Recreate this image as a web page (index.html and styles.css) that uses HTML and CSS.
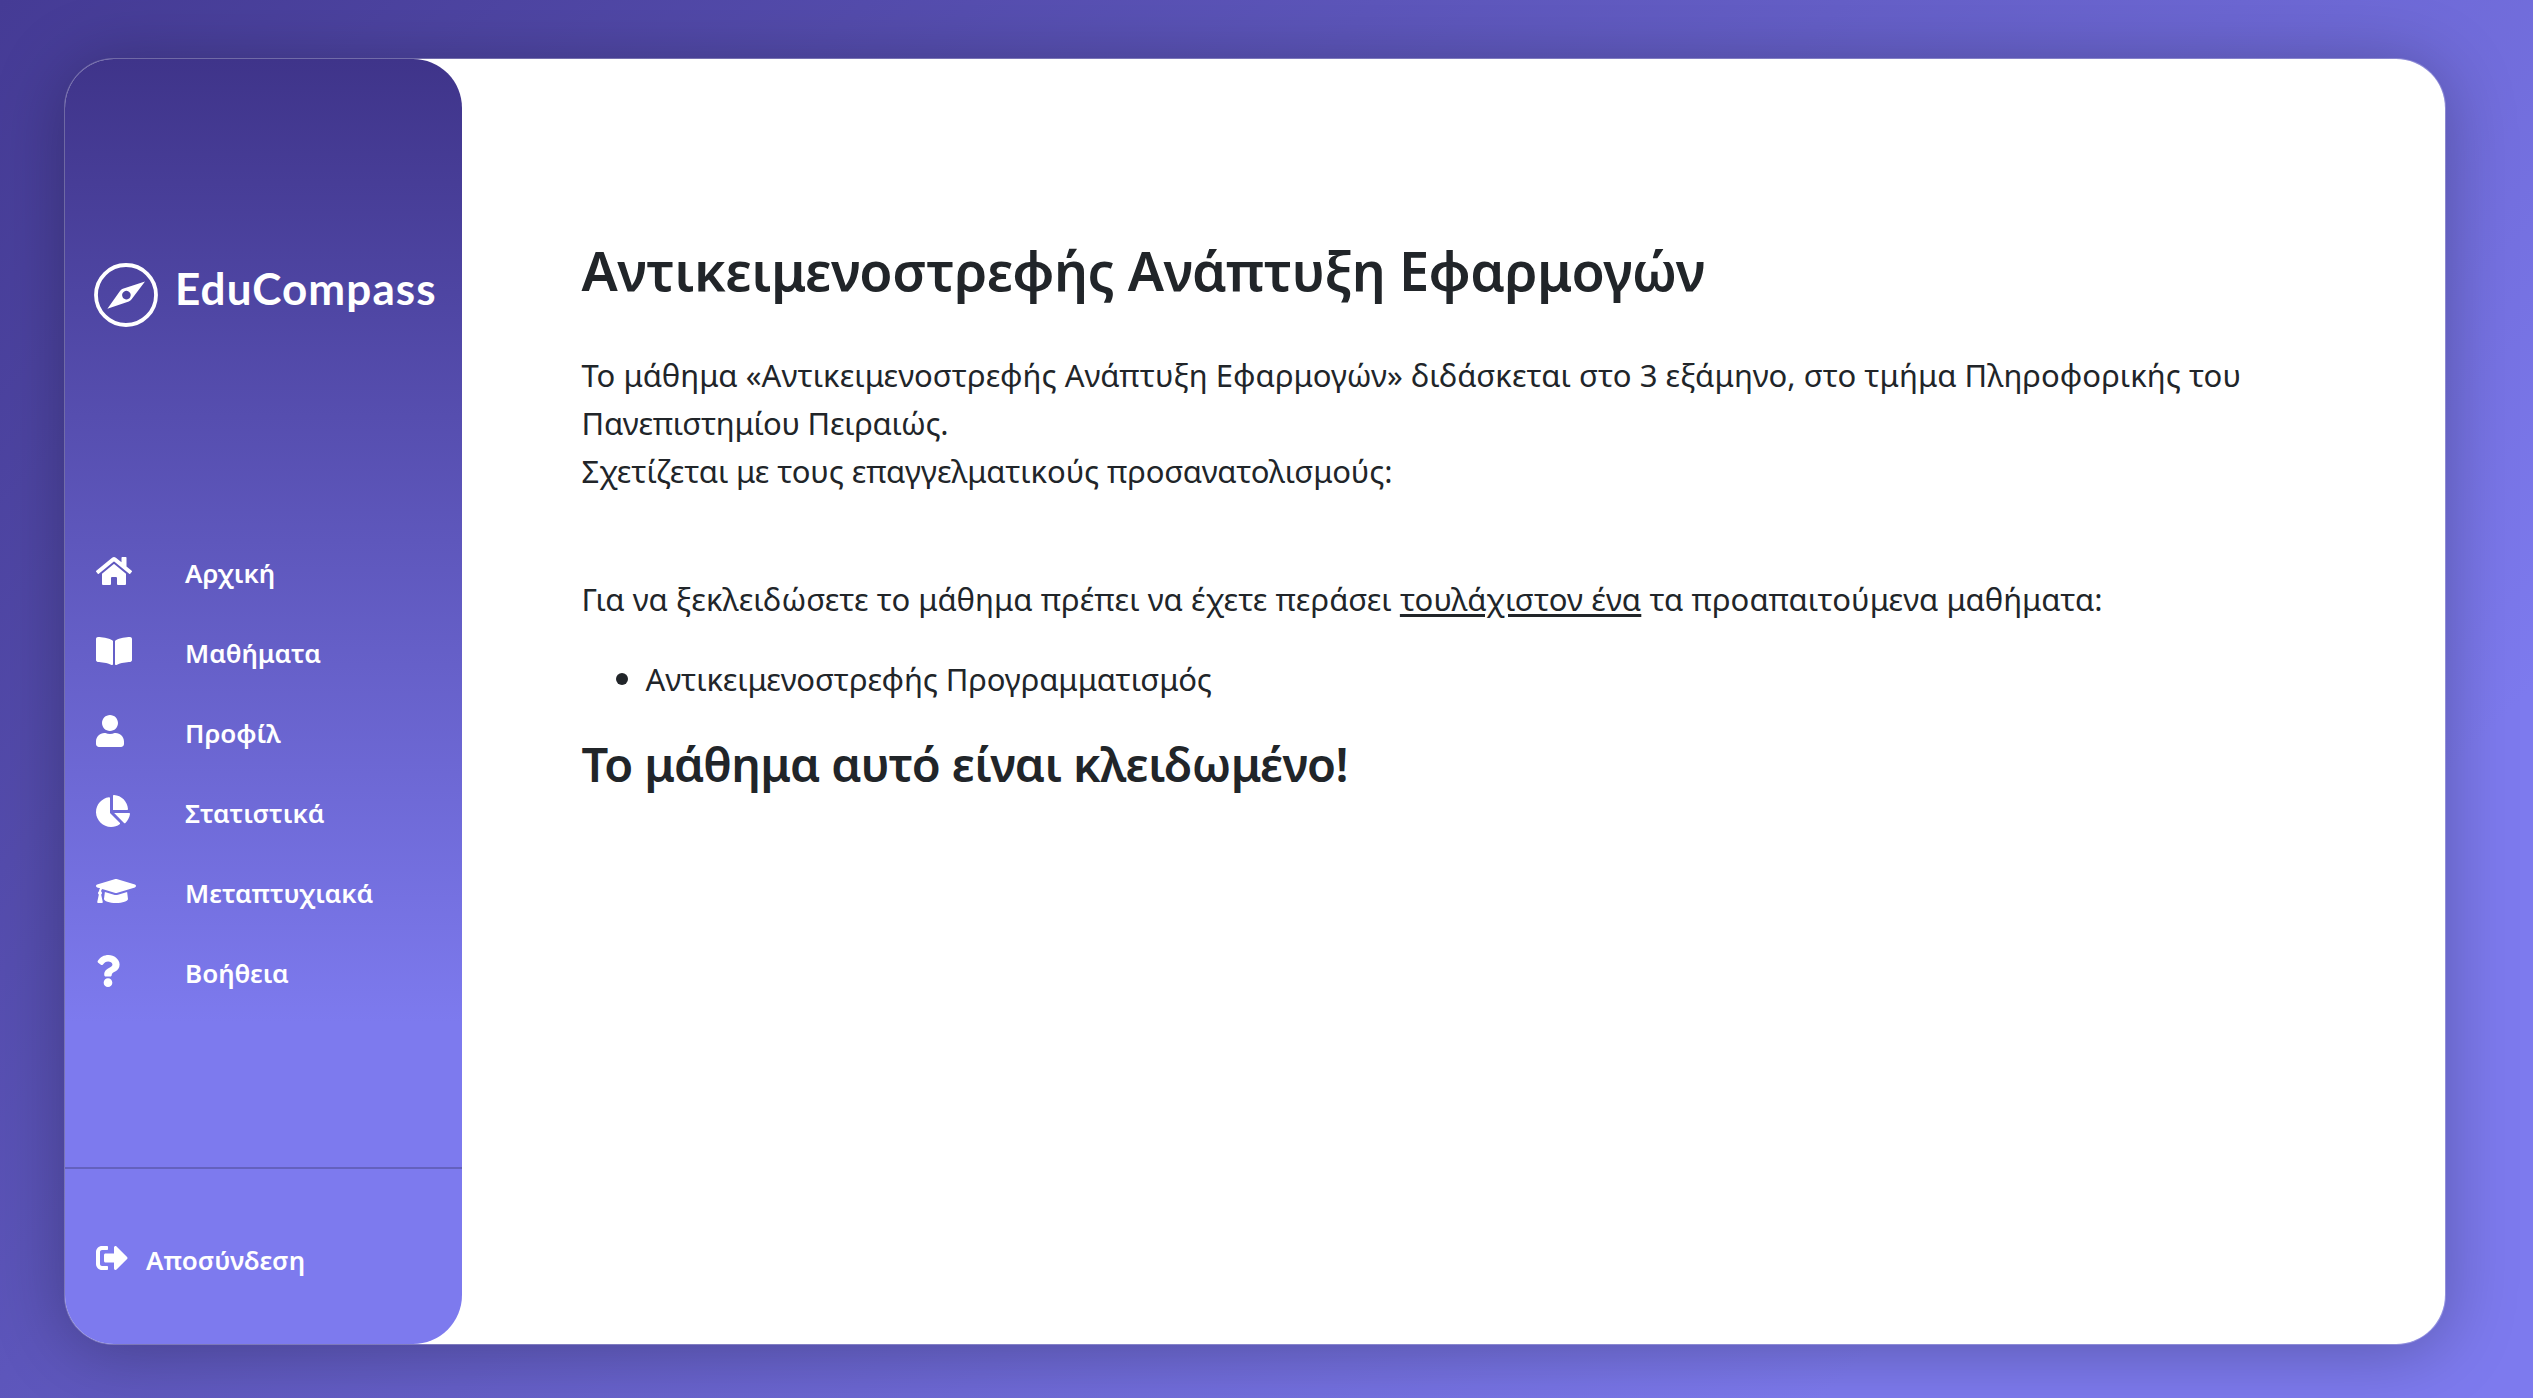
FILE: index.html
```
<!DOCTYPE html>
<html lang="el">
<head>
<meta charset="utf-8">
<title>EduCompass</title>
<link rel="stylesheet" href="styles.css">
</head>
<body>
<div class="card">
  <aside class="sidebar">
    <a class="brand">
      <svg class="brand-mark" viewBox="0 0 64 64">
        <circle cx="32" cy="32" r="30" fill="none" stroke="#fff" stroke-width="3.8"/>
        <path fill="#fff" fill-rule="evenodd" d="M51 18.6 L37.6 36.2 Q36.6 37.6 34.8 38.5 L13.4 45.8 L25.8 28.2 Q26.8 26.6 28.8 25.8 Z M32.4 27.8a4.3 4.3 0 1 0 .01 0z"/>
      </svg>
      <span class="brand-name">EduCompass</span>
    </a>
    <nav class="menu">
      <a class="item"><span class="slot"><svg class="icon" viewBox="0 0 576 512"><path d="M280.37 148.26L96 300.11V464a16 16 0 0 0 16 16l112.06-.29a16 16 0 0 0 15.92-16V368a16 16 0 0 1 16-16h64a16 16 0 0 1 16 16v95.64a16 16 0 0 0 16 16.05L464 480a16 16 0 0 0 16-16V300L295.67 148.26a12.19 12.19 0 0 0-15.3 0zM571.6 251.47L488 182.56V44.05a12 12 0 0 0-12-12h-56a12 12 0 0 0-12 12v72.61L318.47 43a48 48 0 0 0-61 0L4.34 251.47a12 12 0 0 0-1.6 16.9l25.5 31A12 12 0 0 0 45.15 301l235.22-193.74a12.19 12.19 0 0 1 15.3 0L530.9 301a12 12 0 0 0 16.9-1.6l25.5-31a12 12 0 0 0-1.7-16.93z"/></svg></span><span class="label">Αρχική</span></a>
      <a class="item"><span class="slot"><svg class="icon" viewBox="0 0 576 512"><path d="M542.22 32.05c-54.8 3.11-163.72 14.43-230.96 55.59-4.64 2.84-7.27 7.89-7.27 13.17v363.87c0 11.55 12.63 18.85 23.28 13.49 69.18-34.82 169.23-44.32 218.7-46.92 16.89-.89 30.02-14.43 30.02-30.66V62.75c.01-17.71-15.35-31.74-33.77-30.7zM264.73 87.64C197.5 46.48 88.58 35.17 33.78 32.05 15.36 31.01 0 45.04 0 62.75V400.6c0 16.24 13.13 29.78 30.02 30.66 49.49 2.6 149.59 12.11 218.77 46.95 10.62 5.35 23.21-1.94 23.21-13.46V100.63c0-5.29-2.62-10.14-7.27-12.99z"/></svg></span><span class="label">Μαθήματα</span></a>
      <a class="item"><span class="slot"><svg class="icon" viewBox="0 0 448 512"><path d="M224 256c70.7 0 128-57.3 128-128S294.7 0 224 0 96 57.3 96 128s57.3 128 128 128zm89.6 32h-16.7c-22.2 10.2-46.9 16-72.9 16s-50.6-5.8-72.9-16h-16.7C60.2 288 0 348.2 0 422.4V464c0 26.5 21.5 48 48 48h352c26.5 0 48-21.5 48-48v-41.6c0-74.2-60.2-134.4-134.4-134.4z"/></svg></span><span class="label">Προφίλ</span></a>
      <a class="item"><span class="slot"><svg class="icon" viewBox="0 0 544 512"><path d="M527.79 288H290.5l158.03 158.03c6.04 6.04 15.98 6.53 22.19.68 38.7-36.46 65.32-85.61 73.13-140.86 1.34-9.46-6.51-17.85-16.06-17.85zm-15.83-64.8C503.72 103.74 408.26 8.28 288.8.04 279.68-.59 272 7.1 272 16.24V240h223.77c9.14 0 16.82-7.68 16.19-16.8zM224 288V50.71c0-9.55-8.39-17.4-17.84-16.06C86.99 51.49-4.1 155.6.14 280.37 4.5 408.51 114.83 513.59 243.03 511.98c50.4-.63 96.97-16.87 135.26-44.03 7.9-5.6 8.42-17.23 1.57-24.08L224 288z"/></svg></span><span class="label">Στατιστικά</span></a>
      <a class="item"><span class="slot"><svg class="icon" viewBox="0 0 640 512"><path d="M622.34 153.2L343.4 67.5c-15.2-4.67-31.6-4.67-46.79 0L17.66 153.2c-23.54 7.23-23.54 38.36 0 45.59l48.63 14.94c-10.67 13.19-17.23 29.28-17.88 46.9C38.78 266.15 32 276.11 32 288c0 10.78 5.68 19.85 13.86 25.65L20.33 428.53C18.11 438.52 25.71 448 35.94 448h56.11c10.24 0 17.84-9.48 15.62-19.47L82.14 313.65C90.32 307.85 96 298.78 96 288c0-11.57-6.47-21.25-15.66-26.87.76-15.02 8.44-28.3 20.69-36.72L296.6 284.5c9.06 2.78 26.44 6.25 46.79 0l278.95-85.7c23.55-7.24 23.55-38.36 0-45.6zM352.79 315.09c-28.53 8.76-52.84 3.92-65.59 0l-145.02-44.55L128 384c0 35.35 85.96 64 192 64s192-28.65 192-64l-14.18-113.47-145.03 44.56z"/></svg></span><span class="label">Μεταπτυχιακά</span></a>
      <a class="item"><span class="slot"><svg class="icon" viewBox="0 0 384 512"><path d="M202.021 0C122.202 0 70.503 32.703 29.914 91.026c-7.363 10.58-5.093 25.086 5.178 32.874l43.138 32.709c10.373 7.865 25.132 6.026 33.253-4.148 25.049-31.381 43.63-49.449 82.757-49.449 30.764 0 68.816 19.799 68.816 49.631 0 22.552-18.617 34.134-48.993 51.164-35.423 19.86-82.299 44.576-82.299 106.405V320c0 13.255 10.745 24 24 24h72.471c13.255 0 24-10.745 24-24v-5.773c0-42.86 125.268-44.645 125.268-160.627C377.504 66.256 286.902 0 202.021 0zM192 373.459c-38.196 0-69.271 31.075-69.271 69.271 0 38.195 31.075 69.27 69.271 69.27s69.271-31.075 69.271-69.271-31.075-69.27-69.271-69.27z"/></svg></span><span class="label">Βοήθεια</span></a>
    </nav>
    <div class="footer">
      <a class="item logout"><svg class="icon" viewBox="0 0 512 512"><path d="M497 273L329 441c-15 15-41 4.5-41-17v-96H152c-13.3 0-24-10.7-24-24v-96c0-13.3 10.7-24 24-24h136V88c0-21.4 25.9-32 41-17l168 168c9.3 9.4 9.3 24.6 0 34zM192 436v-40c0-6.6-5.4-12-12-12H96c-17.7 0-32-14.3-32-32V160c0-17.7 14.3-32 32-32h84c6.6 0 12-5.4 12-12V76c0-6.6-5.4-12-12-12H96c-53 0-96 43-96 96v192c0 53 43 96 96 96h84c6.6 0 12-5.4 12-12z"/></svg><span class="label">Αποσύνδεση</span></a>
    </div>
  </aside>
  <main class="content">
    <h1 class="title">Αντικειμενοστρεφής Ανάπτυξη Εφαρμογών</h1>
    <p class="intro">Το μάθημα «Αντικειμενοστρεφής Ανάπτυξη Εφαρμογών» διδάσκεται στο 3 εξάμηνο, στο τμήμα Πληροφορικής του <span class="tight">Πανεπιστημίου Πειραιώς.</span><br><span class="snug">Σχετίζεται με τους επαγγελματικούς προσανατολισμούς:</span></p>
    <p class="requirement">Για να ξεκλειδώσετε το μάθημα πρέπει να έχετε περάσει <u class="least">τουλάχιστον ένα</u> τα προαπαιτούμενα μαθήματα:</p>
    <ul class="courses">
      <li class="course">Αντικειμενοστρεφής Προγραμματισμός</li>
    </ul>
    <h2 class="locked">Το μάθημα αυτό είναι κλειδωμένο!</h2>
  </main>
</div>
</body>
</html>
```
FILE: styles.css
```
* { box-sizing: border-box; }

body {
  margin: 0;
  height: 1398px;
  padding: 58px 87px 53px 64px;
  display: flex;
  overflow: hidden;
  background: linear-gradient(135deg, #453b95 0%, #7d7aee 82%);
  font-family: "Noto Sans", "Open Sans", sans-serif;
  font-size: 31px;
  line-height: 48px;
  color: #212529;
}

h1, h2, p, ul { margin: 0; padding: 0; }

.card {
  flex: 1;
  display: flex;
  border: 1px solid rgba(255, 255, 255, .25);
  border-radius: 50px;
  background: #fff;
  background-clip: padding-box;
  box-shadow: 0 6px 70px rgba(0, 0, 0, .28);
}

.sidebar {
  width: 396.5px;
  display: flex;
  flex-direction: column;
  border-radius: 49px;
  background: linear-gradient(180deg, #3f348a 0%, #7d7aee 75%);
  color: #fff;
}

.brand {
  display: flex;
  align-items: flex-start;
  gap: 17px;
  height: 488px;
  padding: 204px 0 0 29px;
}

.brand-mark { width: 64px; height: 64px; }

.brand-name {
  font: 700 44px/50px Lato, sans-serif;
  letter-spacing: 1.1px;
}

.menu {
  display: flex;
  flex-direction: column;
  gap: 32px;
  padding-left: 31px;
  height: 620px;
}

.item {
  display: flex;
  align-items: center;
  height: 48px;
  font-size: 26px;
  font-weight: 600;
}

.slot { width: 89px; display: flex; }

.icon { display: block; height: 32px; fill: #fff; margin-bottom: 1px; }

.label { padding-top: 3px; }

.footer {
  border-top: 2px solid rgba(0, 0, 0, .2);
  padding: 65px 0 0 31px;
}

.logout { gap: 18px; }

.content { padding: 178px 0 0 120px; width: 1800px; }

.title {
  font-size: 54px;
  line-height: 67px;
  font-weight: 600;
  letter-spacing: -.46px;
  margin-bottom: 47px;
  white-space: nowrap;
}

.intro { letter-spacing: .055px; margin-bottom: 80px; }

.tight { letter-spacing: -.27px; }

.snug { letter-spacing: -.1px; }

.requirement { letter-spacing: .07px; margin-bottom: 32px; }

.least { letter-spacing: .15px; text-decoration-thickness: 3px; text-underline-offset: 3px; }

.courses { padding-left: 34px; margin-bottom: 32px; list-style: none; }

.course {
  display: flex;
  align-items: center;
  gap: 18px;
  letter-spacing: -.1px;
}

.course::before {
  content: "";
  width: 12px;
  height: 12px;
  border-radius: 50%;
  background: currentColor;
}

.locked {
  font-size: 47px;
  line-height: 58px;
  font-weight: 600;
  letter-spacing: -.6px;
}
```
